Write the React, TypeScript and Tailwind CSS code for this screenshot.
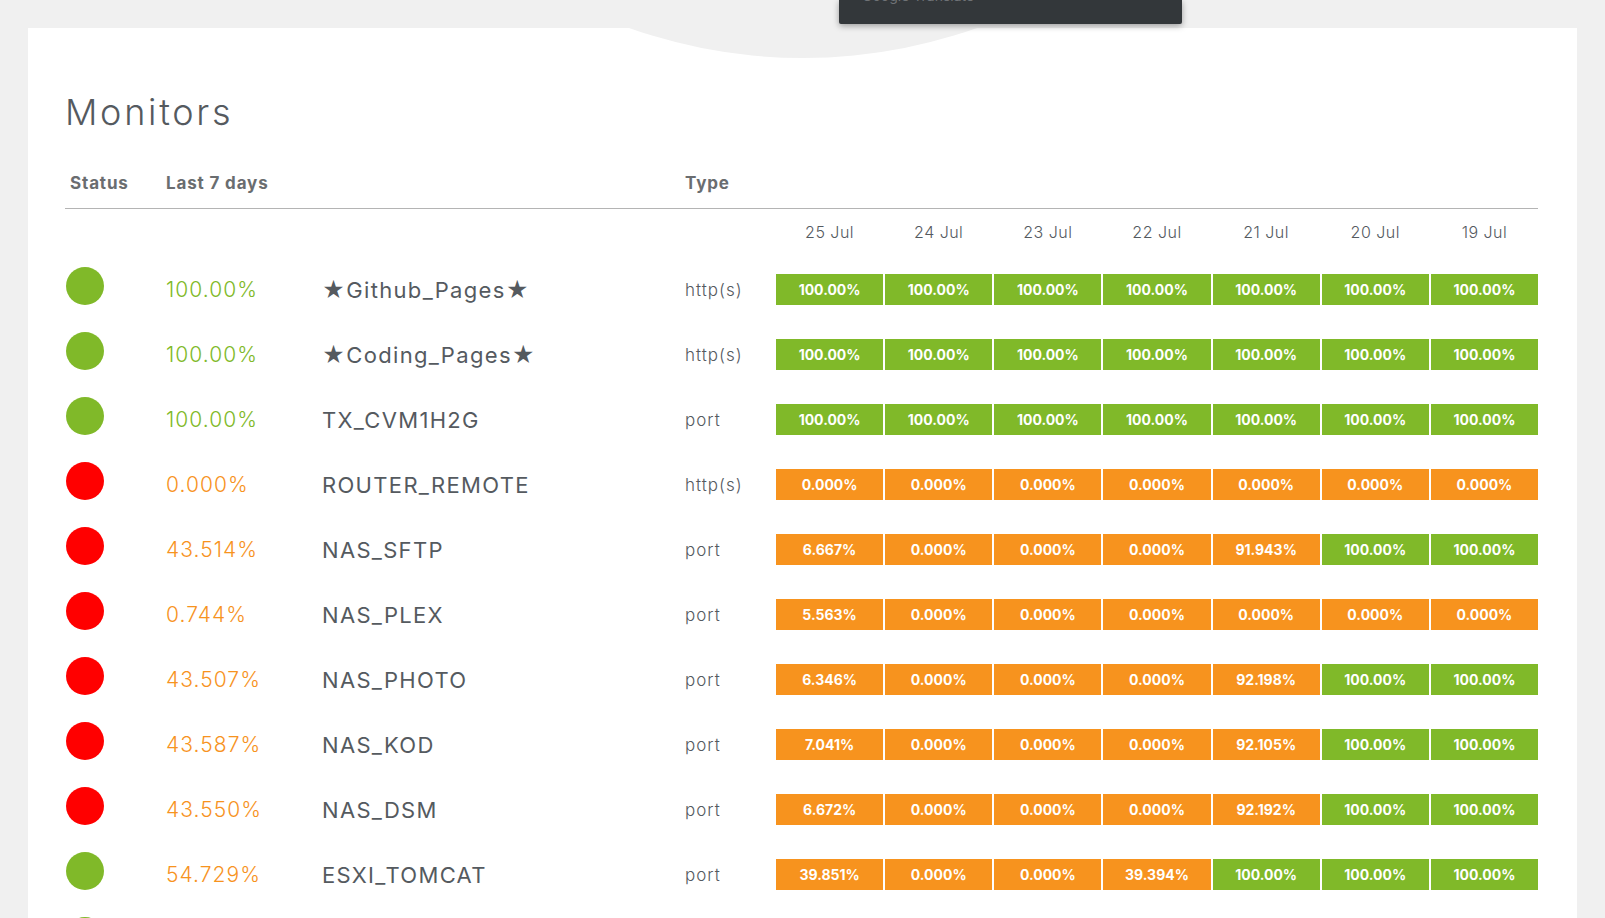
import React from 'react';

const GREEN = 'bg-[#80b929]';
const ORANGE = 'bg-[#f7931e]';

type Monitor = {
  up: boolean;
  uptime: string;
  name: string;
  type: string;
  days: string[];
};

const full = Array(7).fill('100.00%');
const zero = Array(7).fill('0.000%');

const monitors: Monitor[] = [
  { up: true, uptime: '100.00%', name: '★Github_Pages★', type: 'http(s)', days: full },
  { up: true, uptime: '100.00%', name: '★Coding_Pages★', type: 'http(s)', days: full },
  { up: true, uptime: '100.00%', name: 'TX_CVM1H2G', type: 'port', days: full },
  { up: false, uptime: '0.000%', name: 'ROUTER_REMOTE', type: 'http(s)', days: zero },
  { up: false, uptime: '43.514%', name: 'NAS_SFTP', type: 'port', days: ['6.667%', '0.000%', '0.000%', '0.000%', '91.943%', '100.00%', '100.00%'] },
  { up: false, uptime: '0.744%', name: 'NAS_PLEX', type: 'port', days: ['5.563%', '0.000%', '0.000%', '0.000%', '0.000%', '0.000%', '0.000%'] },
  { up: false, uptime: '43.507%', name: 'NAS_PHOTO', type: 'port', days: ['6.346%', '0.000%', '0.000%', '0.000%', '92.198%', '100.00%', '100.00%'] },
  { up: false, uptime: '43.587%', name: 'NAS_KOD', type: 'port', days: ['7.041%', '0.000%', '0.000%', '0.000%', '92.105%', '100.00%', '100.00%'] },
  { up: false, uptime: '43.550%', name: 'NAS_DSM', type: 'port', days: ['6.672%', '0.000%', '0.000%', '0.000%', '92.192%', '100.00%', '100.00%'] },
  { up: true, uptime: '54.729%', name: 'ESXI_TOMCAT', type: 'port', days: ['39.851%', '0.000%', '0.000%', '39.394%', '100.00%', '100.00%', '100.00%'] },
  { up: true, uptime: '100.00%', name: 'ESXI_HOST', type: 'port', days: full },
];

const dates = ['25 Jul', '24 Jul', '23 Jul', '22 Jul', '21 Jul', '20 Jul', '19 Jul'];

const cols = 'grid grid-cols-[101px_156px_363px_91px_1fr]';

export default function App() {
  return (
    <div className="relative min-h-screen bg-[#f0f0f0] px-[28px] pt-[28px] font-['Inter',sans-serif] text-[#555a5f]">
      {/* translate bar peeking from the top */}
      <div className="absolute left-[839px] top-0 z-10 h-[24px] w-[343px] overflow-hidden rounded-b-[2px] bg-[#33373a] shadow-[0_2px_6px_rgba(0,0,0,0.35)]">
        <div className="-mt-[12px] pl-[23px] text-[14px] leading-[16px] text-[#6f7276]">Google Translate</div>
      </div>

      <div className="relative overflow-hidden bg-white pl-[37px] pr-[39px] pt-[62px] pb-[40px]">
        {/* background bump */}
        <div className="absolute left-[255px] top-[-1010px] h-[1040px] w-[1040px] rounded-full bg-[#f0f0f0]"></div>

        <div className="relative">
          <h1 className="text-[36px] font-light leading-[44px] tracking-[0.075em] text-[#555a5f]">Monitors</h1>

          {/* header */}
          <div className={`${cols} mt-[37px] border-b border-[#b4b4b4] pb-[13px] text-[17px] font-bold leading-[24px] tracking-[0.05em] text-[#6a6d70]`}>
            <div className="pl-[5px]">Status</div>
            <div className="col-span-2">Last 7 days</div>
            <div className="col-span-2">Type</div>
          </div>

          {/* dates */}
          <div className={`${cols} pt-[11px]`}>
            <div className="col-span-4"></div>
            <div className="grid grid-cols-7 gap-[2px]">
              {dates.map((d) => (
                <div key={d} className="text-center text-[16px] font-light leading-[24px] tracking-[0.03em] text-[#555a5f]">
                  {d}
                </div>
              ))}
            </div>
          </div>

          {/* rows */}
          <div className="mt-[13px]">
            {monitors.map((m, i) => (
              <div key={i} className={`${cols} h-[65px] items-center`}>
                <div>
                  <div className={`mb-[7px] ml-[1px] h-[38px] w-[38px] rounded-full ${m.up ? 'bg-[#80b929]' : 'bg-[#ff0000]'}`}></div>
                </div>
                <div className={`text-[21px] font-light leading-[28px] tracking-[0.05em] ${m.uptime === '100.00%' ? 'text-[#80b929]' : 'text-[#f7931e]'}`}>
                  {m.uptime}
                </div>
                <div className="text-[22px] leading-[28px] tracking-[0.06em] text-[#555a5f]">{m.name}</div>
                <div className="text-[17px] font-light leading-[24px] tracking-[0.06em] text-[#555a5f]">{m.type}</div>
                <div className="grid grid-cols-7 gap-[2px]">
                  {m.days.map((d, j) => (
                    <div
                      key={j}
                      className={`flex h-[31px] items-center justify-center text-[14px] font-bold text-white ${d === '100.00%' ? GREEN : ORANGE}`}
                    >
                      {d}
                    </div>
                  ))}
                </div>
              </div>
            ))}
          </div>
        </div>
      </div>
    </div>
  );
}
